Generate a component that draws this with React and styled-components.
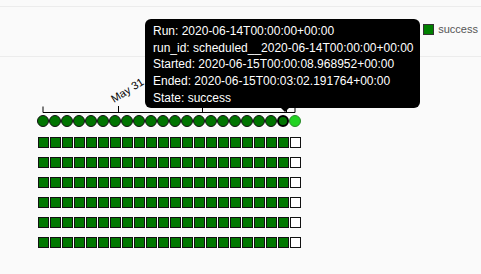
import React from 'react';
import styled, { createGlobalStyle } from "styled-components";

const runs = Array.from({ length: 22 });
const taskRows = Array.from({ length: 6 });

const tooltipLines = [
    "Run: 2020-06-14T00:00:00+00:00",
    "run_id: scheduled__2020-06-14T00:00:00+00:00",
    "Started: 2020-06-15T00:00:08.968952+00:00",
    "Ended: 2020-06-15T00:03:02.191764+00:00",
    "State: success",
];

const App = () => {
    return (
        <Page>
            <Global/>
            <TopStrip/>
            <LegendBar>
                <LegendItem>
                    <Swatch/>
                    success
                </LegendItem>
            </LegendBar>
            <Tree>
                <Axis width="300" height="58" viewBox="0 0 300 58">
                    <path d="M6,49.5V55.5H258V49.5" fill="none" stroke="#000" strokeWidth="1"/>
                    <path d="M81.5,49V55.5M165.5,49V55.5M249.5,49V55.5" stroke="#000" strokeWidth="1"/>
                    <text x="77" y="46" fontSize="11" fontFamily="'Liberation Sans', Arial, sans-serif"
                          transform="rotate(-32 77 46)">May 31</text>
                </Axis>
                <RunRow>
                    {runs.map((_, i) => (
                        <RunDot key={i} $hovered={i === 20} $running={i === 21}/>
                    ))}
                </RunRow>
                <Rows>
                    {taskRows.map((_, r) => (
                        <TaskRow key={r}>
                            {runs.map((_, i) => (
                                <Cell key={i} $empty={i === 21}/>
                            ))}
                        </TaskRow>
                    ))}
                </Rows>
            </Tree>
            <Tooltip>
                {tooltipLines.map(l => <div key={l}>{l}</div>)}
                <Arrow/>
            </Tooltip>
        </Page>
    );
};

export default App;

const Global = createGlobalStyle`
  html, body {
    margin: 0;
    padding: 0;
    background: #fafafa;
  }
`

const Page = styled.div`
  position: relative;
  width: 481px;
  height: 274px;
  overflow: hidden;
  font-family: "Liberation Sans", Arial, sans-serif;
  background: #fafafa;
`

const TopStrip = styled.div`
  height: 6px;
  border-bottom: 1px solid #ececec;
`

const LegendBar = styled.div`
  height: 50px;
  border-bottom: 1px solid #ececec;
  display: flex;
  justify-content: flex-end;
  align-items: flex-start;
  padding: 17px 3px 0 0;
  box-sizing: border-box;
`

const LegendItem = styled.div`
  display: flex;
  align-items: center;
  gap: 4px;
  font-size: 11px;
  color: #555;
  line-height: 11px;
`

const Swatch = styled.span`
  width: 11px;
  height: 11px;
  background: #008000;
  border: 1px solid #333;
  box-sizing: border-box;
`

const Tree = styled.div`
  padding-left: 37px;
  display: flex;
  flex-direction: column;
`

const Axis = styled.svg`
  display: block;
`

const RunRow = styled.div`
  display: flex;
  height: 12px;
`

const RunDot = styled.span`
  width: 12px;
  height: 12px;
  border-radius: 50%;
  box-sizing: border-box;
  background: ${p => p.$running ? "#22d322" : "#007400"};
  border: ${p => p.$hovered ? "2.5px solid #000" : p.$running ? "1px solid #2a8a2a" : "1.8px solid #111"};
`

const Rows = styled.div`
  margin-top: 10px;
  display: flex;
  flex-direction: column;
  gap: 9px;
`

const TaskRow = styled.div`
  display: flex;
  gap: 1px;
  padding-left: 1px;
`

const Cell = styled.span`
  width: 11px;
  height: 11px;
  box-sizing: border-box;
  border: 1px solid #111;
  background: ${p => p.$empty ? "#fff" : "#007800"};
`

const Tooltip = styled.div`
  position: absolute;
  left: 145px;
  top: 19px;
  width: 275px;
  height: 89px;
  box-sizing: border-box;
  padding: 4px 0 0 8px;
  background: #000;
  color: #fff;
  border-radius: 6px;
  font-size: 12px;
  line-height: 16.7px;
  white-space: nowrap;
`

const Arrow = styled.span`
  position: absolute;
  left: 136px;
  bottom: -4px;
  border-left: 4px solid transparent;
  border-right: 4px solid transparent;
  border-top: 4px solid #000;
`
